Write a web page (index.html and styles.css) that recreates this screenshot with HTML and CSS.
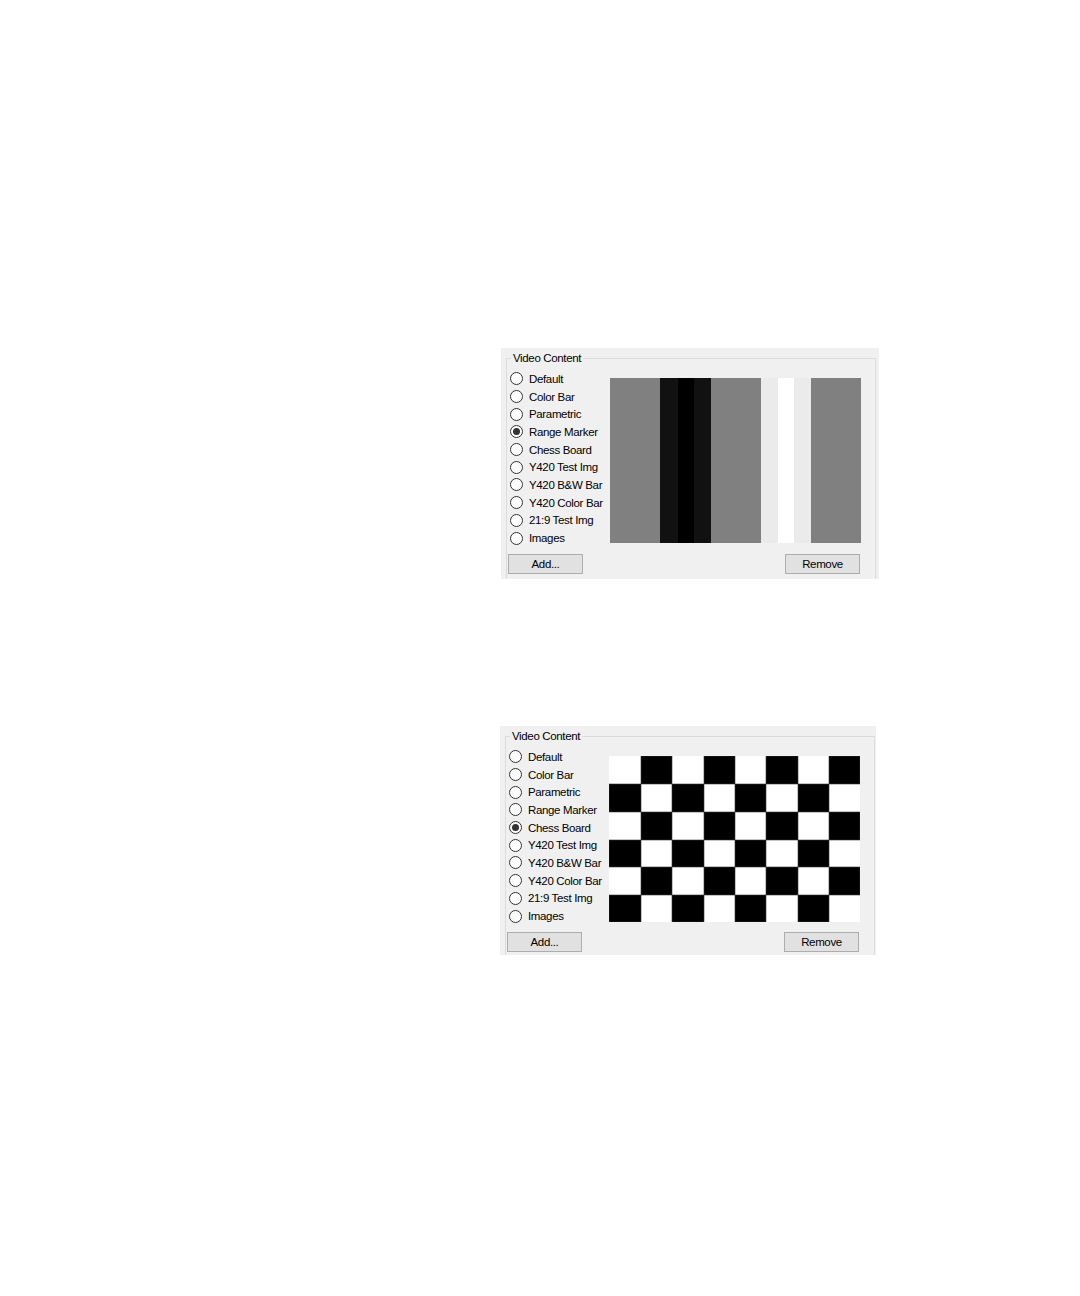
FILE: index.html
```html
<!DOCTYPE html>
<html>
<head>
<meta charset="utf-8">
<title>Video Content</title>
<link rel="stylesheet" href="styles.css">
</head>
<body>
<div class="page">
  <div class="panel">
    <div class="group">
      <span class="legend">Video Content</span>
      <div class="body">
        <div class="options">
          <div class="opt"><span class="radio"></span>Default</div>
          <div class="opt"><span class="radio"></span>Color Bar</div>
          <div class="opt"><span class="radio"></span>Parametric</div>
          <div class="opt"><span class="radio checked"></span>Range Marker</div>
          <div class="opt"><span class="radio"></span>Chess Board</div>
          <div class="opt"><span class="radio"></span>Y420 Test Img</div>
          <div class="opt"><span class="radio"></span>Y420 B&amp;W Bar</div>
          <div class="opt"><span class="radio"></span>Y420 Color Bar</div>
          <div class="opt"><span class="radio"></span>21:9 Test Img</div>
          <div class="opt"><span class="radio"></span>Images</div>
        </div>
        <svg class="preview" width="251" height="165" viewBox="0 0 251 165">
          <rect x="0" y="0" width="50" height="165" fill="#808080"/>
          <rect x="50" y="0" width="18" height="165" fill="#111111"/>
          <rect x="68" y="0" width="16" height="165" fill="#000000"/>
          <rect x="84" y="0" width="17" height="165" fill="#111111"/>
          <rect x="101" y="0" width="50" height="165" fill="#808080"/>
          <rect x="151" y="0" width="17" height="165" fill="#ebebeb"/>
          <rect x="168" y="0" width="16" height="165" fill="#ffffff"/>
          <rect x="184" y="0" width="17" height="165" fill="#ebebeb"/>
          <rect x="201" y="0" width="50" height="165" fill="#808080"/>
        </svg>
      </div>
      <div class="actions">
        <button class="btn">Add...</button>
        <button class="btn">Remove</button>
      </div>
    </div>
  </div>

  <div class="panel panel-b">
    <div class="group">
      <span class="legend">Video Content</span>
      <div class="body">
        <div class="options">
          <div class="opt"><span class="radio"></span>Default</div>
          <div class="opt"><span class="radio"></span>Color Bar</div>
          <div class="opt"><span class="radio"></span>Parametric</div>
          <div class="opt"><span class="radio"></span>Range Marker</div>
          <div class="opt"><span class="radio checked"></span>Chess Board</div>
          <div class="opt"><span class="radio"></span>Y420 Test Img</div>
          <div class="opt"><span class="radio"></span>Y420 B&amp;W Bar</div>
          <div class="opt"><span class="radio"></span>Y420 Color Bar</div>
          <div class="opt"><span class="radio"></span>21:9 Test Img</div>
          <div class="opt"><span class="radio"></span>Images</div>
        </div>
        <svg class="preview preview-chess" width="251" height="166" viewBox="0 0 251 166">
          <rect x="0" y="0" width="251" height="166" fill="#ffffff"/>
          <g fill="#000000" stroke="#3a3a3a" stroke-width="0.6">
            <rect x="32" y="0" width="31" height="28"/>
            <rect x="95" y="0" width="31" height="28"/>
            <rect x="157" y="0" width="32" height="28"/>
            <rect x="220" y="0" width="31" height="28"/>

            <rect x="0" y="28" width="32" height="28"/>
            <rect x="63" y="28" width="32" height="28"/>
            <rect x="126" y="28" width="31" height="28"/>
            <rect x="189" y="28" width="31" height="28"/>

            <rect x="32" y="56" width="31" height="28"/>
            <rect x="95" y="56" width="31" height="28"/>
            <rect x="157" y="56" width="32" height="28"/>
            <rect x="220" y="56" width="31" height="28"/>

            <rect x="0" y="84" width="32" height="27"/>
            <rect x="63" y="84" width="32" height="27"/>
            <rect x="126" y="84" width="31" height="27"/>
            <rect x="189" y="84" width="31" height="27"/>

            <rect x="32" y="111" width="31" height="28"/>
            <rect x="95" y="111" width="31" height="28"/>
            <rect x="157" y="111" width="32" height="28"/>
            <rect x="220" y="111" width="31" height="28"/>

            <rect x="0" y="139" width="32" height="27"/>
            <rect x="63" y="139" width="32" height="27"/>
            <rect x="126" y="139" width="31" height="27"/>
            <rect x="189" y="139" width="31" height="27"/>
          </g>
        </svg>
      </div>
      <div class="actions">
        <button class="btn">Add...</button>
        <button class="btn">Remove</button>
      </div>
    </div>
  </div>
</div>
</body>
</html>
```

FILE: styles.css
```css
html, body {
  margin: 0;
  padding: 0;
  background: #ffffff;
}

body {
  font-family: "Liberation Sans", Arial, sans-serif;
  font-size: 11.5px;
  letter-spacing: -0.35px;
  color: #000000;
}

.page {
  display: flex;
  flex-direction: column;
  align-items: flex-start;
  gap: 147px;
  padding: 348px 0 0 501px;
}

.panel {
  box-sizing: border-box;
  width: 378px;
  height: 231px;
  padding: 10px 0 0 5px;
  background: #f0f0f0;
  overflow: hidden;
}

.panel-b {
  width: 376px;
  height: 229px;
  margin-left: -1px;
}

.group {
  position: relative;
  box-sizing: border-box;
  width: 370px;
  height: 240px;
  border: 1px solid #dcdcdc;
}

.legend {
  position: absolute;
  top: -8px;
  left: 4px;
  padding: 0 2px;
  line-height: 15px;
  background: #f0f0f0;
  white-space: nowrap;
}

.body {
  display: flex;
  align-items: flex-start;
  padding: 11px 0 0 3px;
}

.options {
  display: flex;
  flex-direction: column;
  width: 100px;
}

.opt {
  display: flex;
  align-items: center;
  height: 17.7px;
  white-space: nowrap;
}

.radio {
  position: relative;
  box-sizing: border-box;
  flex: none;
  width: 13px;
  height: 13px;
  margin-right: 6px;
  border: 1px solid #333333;
  border-radius: 50%;
  background: #ffffff;
}

.radio.checked::after {
  content: "";
  position: absolute;
  left: 2px;
  top: 2px;
  width: 7px;
  height: 7px;
  border-radius: 50%;
  background: #333333;
}

.preview {
  display: block;
  flex: none;
  margin-top: 8px;
}

.actions {
  display: flex;
  justify-content: space-between;
  margin-top: 7px;
  padding: 0 15px 0 1px;
}

.btn {
  box-sizing: border-box;
  width: 75px;
  height: 20px;
  padding: 0;
  border: 1px solid #adadad;
  background: #e1e1e1;
  font-family: inherit;
  font-size: inherit;
  letter-spacing: inherit;
  color: #000000;
  line-height: 18px;
}
```
